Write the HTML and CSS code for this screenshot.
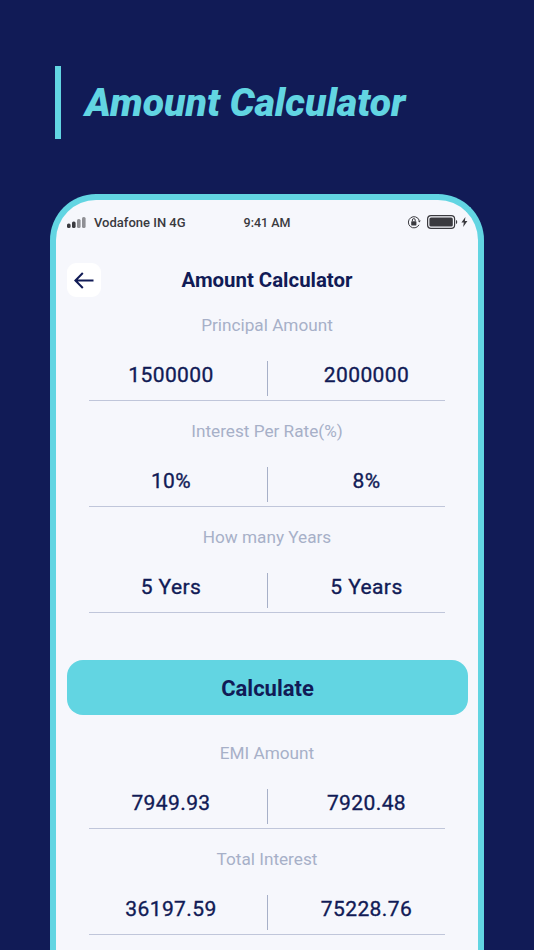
FILE: index.html
```html
<!DOCTYPE html>
<html lang="en">
<head>
<meta charset="utf-8">
<title>Amount Calculator</title>
<link rel="stylesheet" href="styles.css">
</head>
<body>
<div class="page">
  <header class="headline"><h1>Amount Calculator</h1></header>
  <div class="phone">
    <div class="status">
      <div class="status-left">
        <svg class="signal" width="19" height="11" viewBox="0 0 19 11"><rect x="0" y="6.5" width="3.6" height="4.5" rx="1.6" fill="#3a3a3f"/><rect x="5" y="4.5" width="3.6" height="6.5" rx="1.6" fill="#3a3a3f"/><rect x="10" y="2" width="3.6" height="9" rx="1.6" fill="#8f8f94"/><rect x="15" y="0" width="3.6" height="11" rx="1.6" fill="#8f8f94"/></svg>
        <span class="carrier">Vodafone IN 4G</span>
      </div>
      <div class="status-time">9:41 AM</div>
      <div class="status-right">
        <svg class="lock" width="14" height="14" viewBox="0 0 14 14"><path d="M12.2 5.2A5.6 5.6 0 1 0 12 9.8" fill="none" stroke="#3a3a3f" stroke-width="1"/><path d="M10.8 5.6h3l-1.5 1.8z" fill="#3a3a3f"/><rect x="4.2" y="6.2" width="5.2" height="4.2" rx=".6" fill="#3a3a3f"/><path d="M5.4 6.2V5a1.4 1.4 0 0 1 2.8 0v1.2" fill="none" stroke="#3a3a3f" stroke-width="1"/></svg>
        <svg class="battery" width="32" height="14" viewBox="0 0 32 14"><rect x=".6" y=".6" width="27" height="12.8" rx="3.4" fill="none" stroke="#3a3a3f" stroke-width="1.2"/><rect x="2.4" y="2.4" width="23.4" height="9.2" rx="1.6" fill="#3a3a3f"/><path d="M29 5c1.6.4 1.6 3.6 0 4z" fill="#3a3a3f"/></svg>
        <svg class="bolt" width="7" height="10" viewBox="0 0 7 10"><path d="M4.4 0 .4 5.6h2.4L2.2 10l4.2-6H3.9z" fill="#3a3a3f"/></svg>
      </div>
    </div>
    <div class="nav">
      <button class="back" aria-label="Back"><svg width="20" height="17" viewBox="0 0 20 17"><path d="M19.5 8.5H1.6M8.8 1 1.4 8.5l7.4 7.5" fill="none" stroke="#111b56" stroke-width="2"/></svg></button>
      <h2>Amount Calculator</h2>
    </div>
    <section class="group">
      <div class="label">Principal Amount</div>
      <div class="row"><div class="val">1500000</div><div class="val">2000000</div></div>
    </section>
    <section class="group">
      <div class="label">Interest Per Rate(%)</div>
      <div class="row"><div class="val">10%</div><div class="val">8%</div></div>
    </section>
    <section class="group">
      <div class="label">How many Years</div>
      <div class="row"><div class="val">5 Yers</div><div class="val">5 Years</div></div>
    </section>
    <button class="calc">Calculate</button>
    <section class="group">
      <div class="label">EMI Amount</div>
      <div class="row"><div class="val">7949.93</div><div class="val">7920.48</div></div>
    </section>
    <section class="group">
      <div class="label">Total Interest</div>
      <div class="row"><div class="val">36197.59</div><div class="val">75228.76</div></div>
    </section>
  </div>
</div>
</body>
</html>
```
FILE: styles.css
```css
* { box-sizing: border-box; }
html, body { margin: 0; height: 100%; }
body { background: #111b56; font-family: Roboto, sans-serif; overflow: hidden; }
.page { width: 534px; height: 950px; overflow: hidden; padding: 66px 50px 0; }
.headline { margin-left: 5px; height: 73px; border-left: 6px solid #62d5e2; display: flex; align-items: center; padding: 3px 0 0 24px; margin-bottom: 55px; }
.headline h1 { margin: 0; font-size: 39.2px; font-weight: 900; font-style: italic; color: #62d5e2; line-height: 1; white-space: nowrap; }
.phone { width: 434px; height: 900px; background: #f6f7fc; border: 6px solid #62d5e2; border-bottom: 0; border-radius: 46px 46px 0 0; padding: 0 11px; }
.status { height: 44px; display: flex; align-items: center; justify-content: space-between; position: relative; font-size: 12.5px; font-weight: 500; color: #3a3a3f; }
.status-left { display: flex; align-items: center; gap: 8px; }
.carrier { font-size: 13px; }
.status-time { position: absolute; left: 50%; transform: translateX(-50%); }
.status-right { display: flex; align-items: center; margin-right: -1px; }
.battery { margin-left: 6px; }
.bolt { margin-left: 2px; }
.nav { height: 34px; margin-top: 19px; margin-bottom: 18px; position: relative; display: flex; align-items: center; justify-content: center; }
.nav h2 { margin: 0; font-size: 20.4px; font-weight: 700; color: #111b56; }
.back { position: absolute; left: 0; top: 0; width: 34px; height: 34px; border: 0; padding: 0; background: #fff; border-radius: 9px; display: flex; align-items: center; justify-content: center; }
.group { display: flex; flex-direction: column; align-items: center; margin-bottom: 20px; }
.label { font-size: 17.2px; color: #a7b0c8; line-height: 20px; text-align: center; }
.row { width: 356px; display: flex; margin-top: 26px; padding-bottom: 4px; border-bottom: 1px solid #c0c6da; }
.val { flex: 0 0 178px; height: 35px; display: flex; align-items: center; justify-content: center; padding: 0 14px 7px 0; font-size: 21px; font-weight: 400; -webkit-text-stroke: .35px #111b56; color: #111b56; letter-spacing: .4px; }
.val + .val { border-left: 1px solid #a7b0c8; padding: 0 0 7px 20px; }
.calc { display: block; width: 401px; height: 55px; margin: 47px 0 28px; padding: 2px 0 0; border: 0; border-radius: 16px; background: #62d5e2; color: #111b56; font: 700 22px Roboto, sans-serif; }
```
